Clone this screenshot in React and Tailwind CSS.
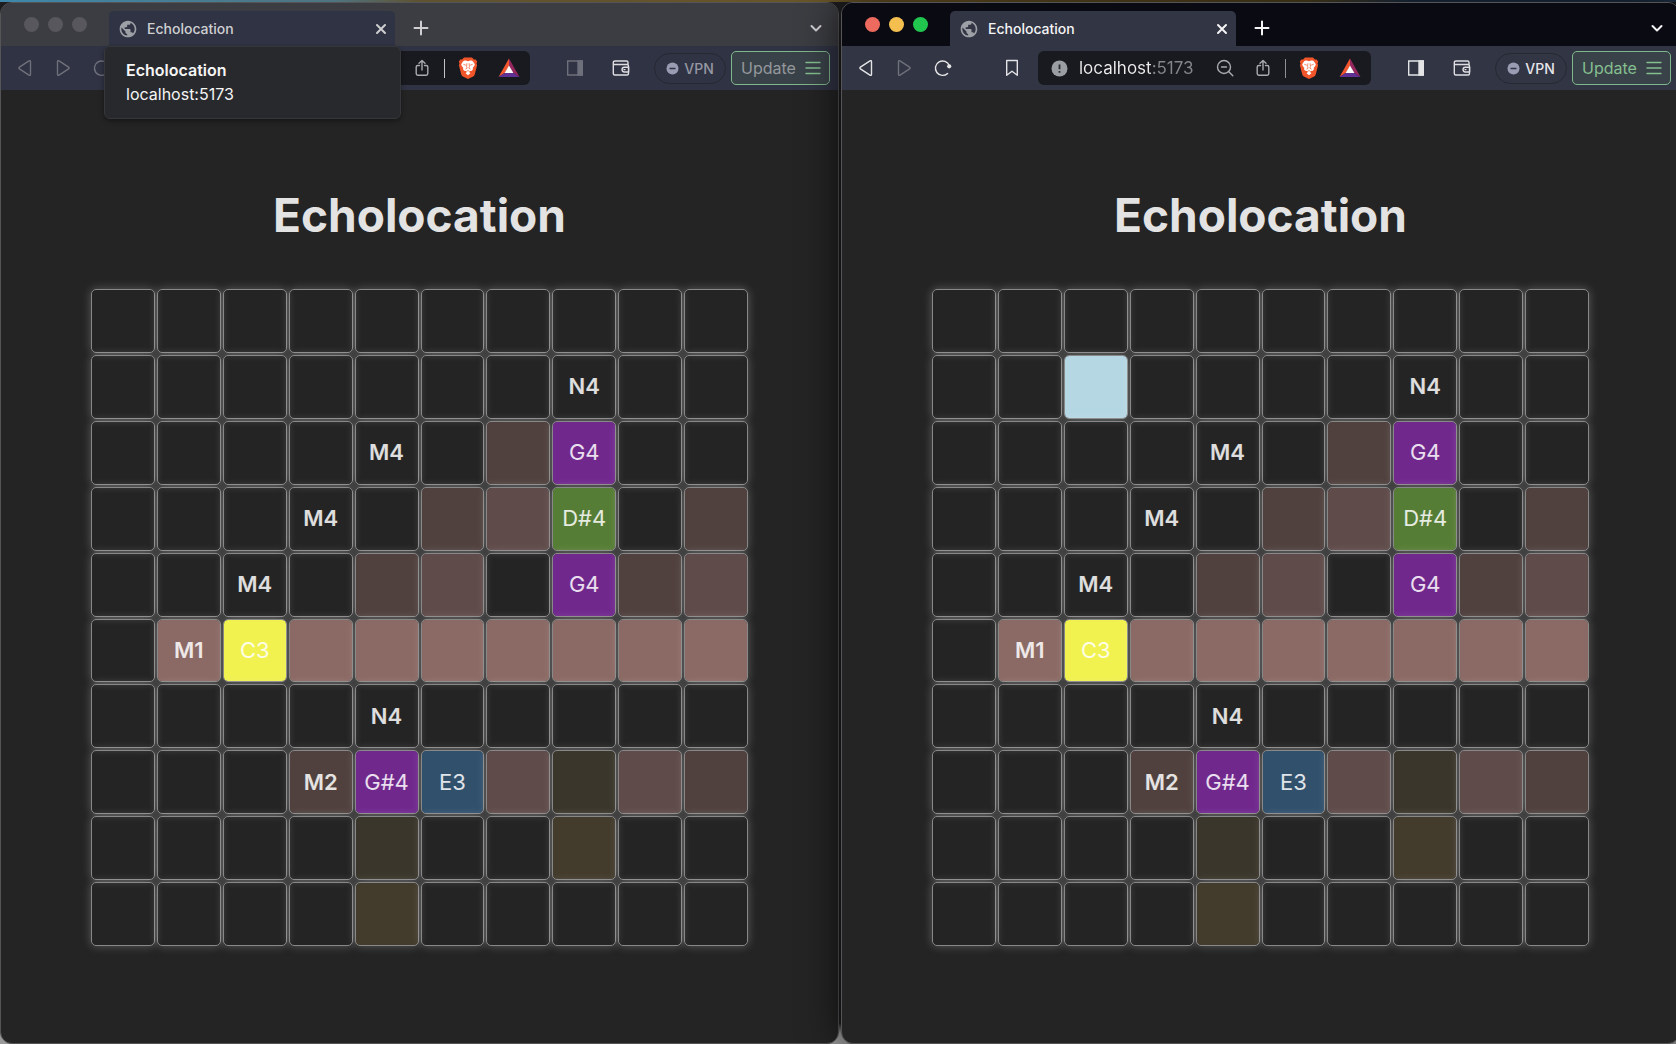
import React from "react";
import { MdPublic } from "react-icons/md";

const FILLS = {
  a: "bg-[#50413e]",
  b: "bg-[#5f4b4a]",
  c: "bg-[#8b6964]",
  y: "bg-[#f1f150]",
  p: "bg-[#70288d]",
  g: "bg-[#567d35]",
  e: "bg-[#30506c]",
  o: "bg-[#3b362b]",
  k: "bg-[#433c2d]",
  w: "bg-[#b5d7e3]",
};

const ROWS = [
  "..........",
  "..........",
  "......ap..",
  ".....abg.a",
  "....ab.pab",
  ".cyccccccc",
  "..........",
  "...apeboba",
  "....o..k..",
  "....k.....",
];

const EMITTERS = {
  "1-7": "N4",
  "2-4": "M4",
  "3-3": "M4",
  "4-2": "M4",
  "5-1": "M1",
  "6-4": "N4",
  "7-3": "M2",
};

const NOTES = {
  "2-7": "G4",
  "3-7": "D#4",
  "4-7": "G4",
  "5-2": "C3",
  "7-4": "G#4",
  "7-5": "E3",
};

function Board({ cursor }) {
  return (
    <div className="grid w-[657px] max-w-full grid-cols-10 gap-[2px]">
      {ROWS.flatMap((row, r) =>
        row.split("").map((code, c) => {
          const key = `${r}-${c}`;
          const fill = FILLS[key === cursor ? "w" : code] || "";
          return (
            <div
              key={key}
              className={`flex aspect-square items-center justify-center rounded-[5px] border border-[#888888] bg-clip-padding text-[22px] text-white/85 shadow-[0_0_10px_rgba(255,255,255,0.26)] ${fill}`}
            >
              {EMITTERS[key] ? <strong className="font-semibold">{EMITTERS[key]}</strong> : NOTES[key]}
            </div>
          );
        })
      )}
    </div>
  );
}

function Stroke({ className = "", children, w = 18, h = 18, sw = 1.4 }) {
  return (
    <svg
      aria-hidden="true"
      className={`shrink-0 ${className}`}
      width={w}
      height={h}
      viewBox={`0 0 ${w} ${h}`}
      fill="none"
      stroke="currentColor"
      strokeWidth={sw}
      strokeLinecap="round"
      strokeLinejoin="round"
    >
      {children}
    </svg>
  );
}

function BraveLogo() {
  return (
    <svg aria-hidden="true" className="shrink-0" width="20" height="22" viewBox="0 0 20 22">
      <path d="M6 0.5h8l1.9 2.1 1.7-.2 1.6 2.2-.7 2 .6 1.7-2.4 9.1c-.3 1-.8 1.6-1.6 2.2L10 22l-5.1-2.4c-.8-.6-1.3-1.2-1.6-2.2L.9 8.300l.6-1.7-.7-2 1.600-2.200 1.700.2z" fill="#f1562b" />
      <path d="M10 4.200c1 0 2.300-.7 3.200-.6 1 .1 1.700.8 2.300 1.600l1.300 2-.4 1.500-1.700 2.200.3 1.300-1.200 1.500-1.800.3-.8.900 1.200 1.300L10 18.200l-2.400-2 1.200-1.300-.8-.9-1.800-.3L5 12.200l.3-1.300-1.700-2.200-.4-1.500 1.300-2c.6-.8 1.300-1.500 2.300-1.600.9-.1 2.200.6 3.200.6z" fill="#fff" />
      <path d="M5.300 7.300l2.600.9M14.700 7.300l-2.600.9M8.900 6.300l-.3 3 .5 1.900-1.600 1M11.100 6.300l.3 3-.5 1.900 1.600 1M8.400 14.500l1.600-1 1.600 1" stroke="#f1562b" strokeWidth="0.7" fill="none" />
    </svg>
  );
}

function BatLogo() {
  return (
    <svg aria-hidden="true" className="shrink-0" width="22" height="20" viewBox="0 0 22 20">
      <path d="M11 0.500L0.500 19 7 14.800 11 8z" fill="#f2562f" />
      <path d="M11 0.500L21.500 19 15 14.800 11 8z" fill="#97285f" />
      <path d="M0.500 19h21L15 14.800H7z" fill="#5f3195" />
      <path d="M11 7.500L15.400 15H6.600z" fill="#fff" />
    </svg>
  );
}

function TrafficLights({ active }) {
  const colors = active ? ["bg-[#ed6a5e]", "bg-[#f5bf4f]", "bg-[#21c64f]"] : ["bg-[#58575d]", "bg-[#58575d]", "bg-[#58575d]"];
  const names = ["Close window", "Minimise window", "Zoom window"];
  return (
    <div className="flex h-[43px] w-[108px] items-center gap-[9px] pl-[23px]">
      {names.map((n, i) => (
        <button key={n} aria-label={n} className={`size-[15px] rounded-full ${colors[i]}`} />
      ))}
    </div>
  );
}

function TabStrip({ active }) {
  return (
    <div className={`flex h-[43px] ${active ? "bg-[#0a0a13] text-[#f4f4f5]" : "bg-[#3c3d42] text-[#cfcfd2]"}`}>
      <TrafficLights active={active} />
      <div className={`relative mt-2 flex w-[286px] items-center rounded-t-[5px] pr-[7px] pl-[9px] ${active ? "bg-[#323544]" : "bg-[#303343]"}`}>
        <MdPublic className="size-[20px] shrink-0 text-[#9da0a5]" />
        <span className="ml-[9px] flex-1 text-[14px] font-medium">Echolocation</span>
        <button aria-label="Close tab">
          <Stroke w={14} h={14} sw={2}>
            <path d="M3 3l8 8M11 3l-8 8" />
          </Stroke>
        </button>
        {!active && (
          <div
            role="tooltip"
            className="absolute top-[35px] -left-[5px] z-20 h-[73px] w-[297px] rounded-[6px] border border-[#36373b] bg-[#28292d] pt-[11px] pl-[21px] text-[16px] leading-[24px] text-[#f5f5f5] shadow-[0_2px_5px_rgba(0,0,0,0.4)]"
          >
            <p className="font-semibold">Echolocation</p>
            <p>localhost:5173</p>
          </div>
        )}
      </div>
      <button aria-label="New tab" className="ml-[18px] pt-[7px]">
        <Stroke w={16} h={16} sw={2}>
          <path d="M8 1.500v13M1.500 8h13" />
        </Stroke>
      </button>
      <button aria-label="Search tabs" className="mr-[15px] ml-auto pt-[7px]">
        <Stroke w={14} h={14} sw={2}>
          <path d="M2.500 5l4.500 4.500 4.500-4.500" />
        </Stroke>
      </button>
    </div>
  );
}

function Toolbar({ active }) {
  const on = active ? "text-[#e4e4e6]" : "text-[#6e707b]";
  return (
    <div className={`flex h-[44px] items-center pr-[8px] pl-[15px] ${active ? "bg-[#323544]" : "bg-[#303343]"}`}>
      <button aria-label="Back" className={on}>
        <Stroke>
          <path d="M14.500 2.600v12.800c0 .8-.9 1.300-1.500.8L3.400 9.800c-.6-.4-.6-1.200 0-1.600L13 1.800c.6-.5 1.500 0 1.500.8z" />
        </Stroke>
      </button>
      <button aria-label="Forward" className="ml-[20px] text-[#6e707b]">
        <Stroke>
          <path d="M3.500 2.600v12.800c0 .8.900 1.300 1.500.8l9.600-6.400c.6-.4.6-1.200 0-1.600L5 1.800c-.6-.5-1.500 0-1.500.8z" />
        </Stroke>
      </button>
      <button aria-label="Reload" className={`ml-[21px] ${on}`}>
        <Stroke>
          <path d="M13.600 14.400A7.200 7.200 0 1 1 15.300 6.500" />
          <circle cx="15.200" cy="7.300" r="2.100" fill="currentColor" stroke="none" />
        </Stroke>
      </button>
      <button aria-label="Bookmark this page" className={`ml-[51px] ${on}`}>
        <Stroke>
          <path d="M3.700 1.500h10.600v14.800L9 12.300l-5.300 4z" />
        </Stroke>
      </button>
      <div className="mr-[36px] ml-[17px] flex h-[34px] min-w-0 flex-1 items-center rounded-[6px] bg-[#191a1f] pr-[10px] pl-[13px] text-[#a9abb0]">
        <svg aria-hidden="true" className="shrink-0" width="17" height="17" viewBox="0 0 17 17">
          <circle cx="8.500" cy="8.500" r="8" fill="#9b9fa4" />
          <path d="M8.500 4.500v4.800M8.500 11v1.800" stroke="#2a2b30" strokeWidth="1.800" />
        </svg>
        <input
          aria-label="Address"
          defaultValue="localhost:5173"
          className="ml-[11px] h-[34px] w-0 min-w-0 flex-1 bg-[linear-gradient(90deg,#eeeeef_72px,#84868b_72px)] bg-clip-text text-[17px] text-transparent outline-none"
        />
        <button aria-label="Zoom level">
          <Stroke>
            <circle cx="8" cy="8" r="6.500" />
            <path d="M12.800 12.800l4 4M5.500 8h5" />
          </Stroke>
        </button>
        <button aria-label="Share" className="ml-[20px]">
          <Stroke>
            <path d="M6.500 6.500H4.800c-1 0-1.600.6-1.600 1.600v6.500c0 1 .6 1.600 1.600 1.600h8.400c1 0 1.600-.6 1.600-1.600V8.100c0-1-.6-1.600-1.600-1.600h-1.700M9 11V1.500M6 4.200l3-2.700 3 2.700" />
          </Stroke>
        </button>
        <span className={`mr-[13px] ml-[13px] h-[19px] w-px ${active ? "bg-[#8d8f95]" : "bg-[#c2c3c7]"}`} />
        <button aria-label="Brave Shields">
          <BraveLogo />
        </button>
        <button aria-label="Brave Rewards" className="ml-[20px]">
          <BatLogo />
        </button>
      </div>
      <button aria-label="Side panel" className={on}>
        <Stroke>
          <path d="M1.700 2h14.600v14H1.700z" strokeLinejoin="miter" />
          <path d="M12 2h4.300v14H12z" fill="currentColor" />
        </Stroke>
      </button>
      <button aria-label="Wallet" className="ml-[28px] text-[#dedee2]">
        <Stroke>
          <path d="M16 5.500v-2c0-1-.5-1.500-1.500-1.500H3C2 2 1.300 2.500 1.300 3.500v11c0 1 .5 1.500 1.500 1.500H15c1 0 1.500-.5 1.500-1.500V7c0-1-.5-1.500-1.500-1.500H1.500M16.700 8.200h-4.400c-3 0-3 4.800 0 4.800h4.400zM12 10.600h1" />
        </Stroke>
      </button>
      <button className={`ml-[24px] flex h-[31px] w-[72px] items-center justify-center gap-[5px] rounded-full border border-[#262832] text-[14px] font-medium ${active ? "text-[#e6e6ea]" : "text-[#9698a3]"}`}>
        <svg aria-hidden="true" width="13" height="13" viewBox="0 0 13 13">
          <circle cx="6.500" cy="6.500" r="6" fill="#9a9cb3" />
          <path d="M3.500 6.500h6" stroke="#303343" strokeWidth="1.600" />
        </svg>
        VPN
      </button>
      <button className={`ml-[5px] flex h-[34px] w-[99px] items-center justify-between rounded-[5px] border border-[#7fb88a] bg-[#3a4249] pr-[8px] pl-[9px] text-[16px] ${active ? "text-[#84bf8f]" : "text-[#94989d]"}`}>
        Update
        <Stroke w={16} h={14} className="text-[#84bf8f]">
          <path d="M1 1.500h14M1 7h14M1 12.500h14" />
        </Stroke>
      </button>
    </div>
  );
}

function BrowserWindow({ active = false, cursor }) {
  return (
    <section
      aria-label={active ? "Active browser window" : "Background browser window"}
      className={`min-w-0 flex-1 overflow-hidden rounded-[12px] border border-[#555558] bg-[#242424] ${active ? "relative shadow-[0_0_40px_rgba(0,0,0,0.7)]" : ""}`}
    >
      <TabStrip active={active} />
      <Toolbar active={active} />
      <main className="flex flex-col items-center pt-[97px] pb-[80px]">
        <h1 className="mb-[46px] text-[46px] leading-[56px] font-bold text-[#e3e3e3]">Echolocation</h1>
        <Board cursor={cursor} />
      </main>
    </section>
  );
}

export default function App() {
  return (
    <div className="min-h-screen overflow-hidden bg-[linear-gradient(90deg,#3d88ac_0%,#4f7480_20%,#5e5230_25%,#6b5526_55%,#54461f_78%,#1f3147_84%,#1f3147_100%)] font-['Inter',sans-serif]">
      <div className="-mr-1 flex min-h-screen gap-[2px] bg-[linear-gradient(180deg,transparent_2px,#1e1e20_2px,#1e1e20_98%,#9a9a9a_99%)] pt-[2px]">
        <BrowserWindow />
        <BrowserWindow active cursor="1-2" />
      </div>
    </div>
  );
}
